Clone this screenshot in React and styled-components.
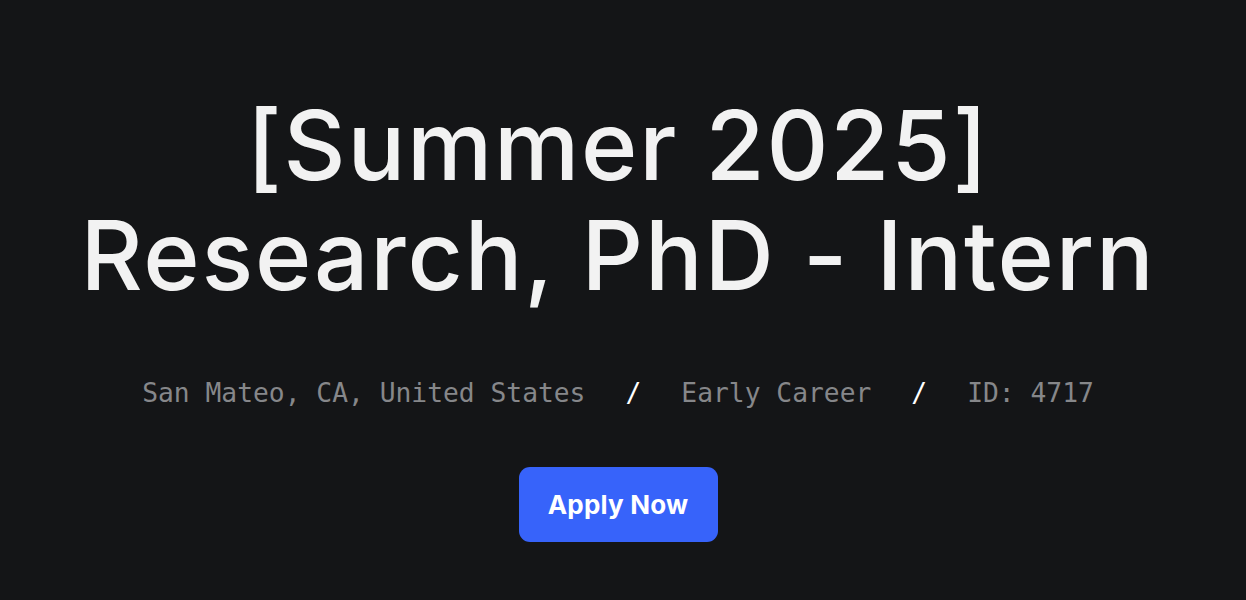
import React from 'react';
import styled, { createGlobalStyle } from 'styled-components';

const GlobalStyle = createGlobalStyle`
  html, body {
    margin: 0;
    padding: 0;
    background: #141517;
  }
`;

const Page = styled.main`
  min-height: 600px;
  background: #141517;
  display: flex;
  flex-direction: column;
  align-items: center;
  padding: 90px 10px 0 0;
  box-sizing: border-box;
`;

const Title = styled.h1`
  margin: 0;
  font-family: Inter, "Liberation Sans", sans-serif;
  font-weight: 500;
  font-size: 96px;
  line-height: 110px;
  letter-spacing: 1.8px;
  color: #f2f2f2;
  text-align: center;
`;

const Meta = styled.div`
  margin-top: 67px;
  display: flex;
  align-items: center;
  gap: 40px;
  font-family: "DejaVu Sans Mono", "Liberation Mono", monospace;
  font-size: 26.3px;
  line-height: 32px;
  color: #86878a;
`;

const Slash = styled.span`
  color: #ffffff;
`;

const ApplyButton = styled.button`
  margin-top: 58px;
  width: 199px;
  height: 75px;
  border: none;
  border-radius: 11px;
  background: #3763fa;
  color: #ffffff;
  font-family: Inter, "Liberation Sans", sans-serif;
  font-weight: 700;
  font-size: 26px;
  letter-spacing: 0.2px;
  cursor: pointer;
`;

const items = ['San Mateo, CA, United States', 'Early Career', 'ID: 4717'];

export default function App() {
  return (
    <>
      <GlobalStyle />
      <Page>
        <Title>
          [Summer 2025]
          <br />
          Research, PhD - Intern
        </Title>
        <Meta>
          {items.map((item, i) => (
            <React.Fragment key={item}>
              {i > 0 && <Slash>/</Slash>}
              <span>{item}</span>
            </React.Fragment>
          ))}
        </Meta>
        <ApplyButton>Apply Now</ApplyButton>
      </Page>
    </>
  );
}
